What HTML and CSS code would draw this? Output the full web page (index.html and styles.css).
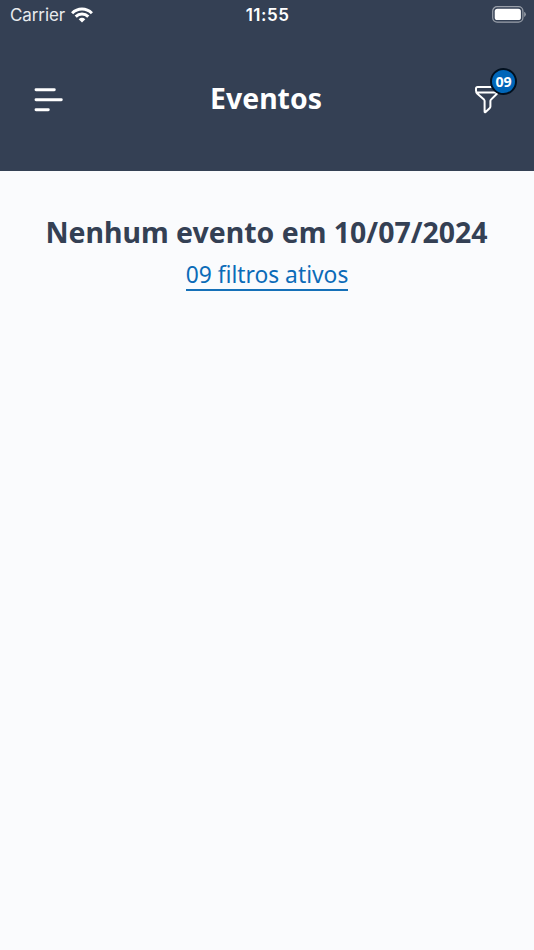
FILE: index.html
```html
<!DOCTYPE html>
<html lang="pt-BR">
<head>
<meta charset="utf-8">
<title>Eventos</title>
<link rel="stylesheet" href="styles.css">
</head>
<body>
<header class="header">
  <div class="status">
    <div class="carrier"><span>Carrier</span>
      <svg width="22" height="16" viewBox="0 0 22 16" fill="none" stroke="#fff" stroke-width="3"><path d="M1.1 6.2C6.8.6 15.2.6 20.9 6.2M4.7 9.7C8.3 6.2 13.7 6.2 17.3 9.7"/><path d="M11 15.6 7.7 12.2Q11 9.4 14.3 12.2Z" fill="#fff" stroke="none"/></svg>
    </div>
    <time class="time">11:55</time>
    <svg class="battery" width="34" height="17" viewBox="0 0 34 17"><rect x=".7" y=".7" width="30.2" height="15.4" rx="4.4" fill="none" stroke="#9aa0aa" stroke-width="1.2"/><rect x="2.7" y="2.8" width="26.2" height="11.2" rx="2.6" fill="#fff"/><path d="M32.2 5.7Q33.8 6.4 33.8 8.3T32.2 11Z" fill="#9aa0aa"/></svg>
  </div>
  <nav class="bar">
    <button class="icon-button menu" aria-label="Menu">
      <svg width="30" height="26" viewBox="0 0 30 26" fill="none" stroke="#fff" stroke-width="2.9" stroke-linecap="round"><path d="M2 2.8H20.3M2 12.8H27.3M2 22.7H14.3"/></svg>
    </button>
    <h1 class="title">Eventos</h1>
    <button class="icon-button filter" aria-label="Filtros">
      <svg width="26" height="30" viewBox="0 0 26 30" fill="none" stroke="#fff" stroke-width="2" stroke-linejoin="round"><path d="M3.6 2H22.6Q24.2 2 24.2 3.6V5.6Q24.2 7.4 22.9 8.7L17 14.6Q16.4 15.2 16.4 16V21.6Q16.4 22.6 15.6 23.3L11.6 27Q10.6 27.8 10.6 26.4V16Q10.6 15.2 10 14.6L3.4 8.7Q2 7.4 2 5.6V3.6Q2 2 3.6 2ZM2.8 7.4H23.5"/></svg>
      <span class="badge">09</span>
    </button>
  </nav>
</header>
<main class="content">
  <h2 class="message">Nenhum evento em 10/07/2024</h2>
  <a class="link" href="#">09 filtros ativos</a>
</main>
</body>
</html>
```
FILE: styles.css
```css
* { box-sizing: border-box; }
body {
  margin: 0;
  min-height: 950px;
  background: #fafbfd;
  color: #344054;
  font-family: "Noto Sans", sans-serif;
}
.header { height: 171px; background: #344054; color: #fff; }
.status {
  display: grid;
  grid-template-columns: 1fr auto 1fr;
  align-items: center;
  height: 28px;
  padding: 2px 8px 0 10px;
  font: 17px/26px Inter, sans-serif;
}
.carrier { display: flex; align-items: center; gap: 6px; color: #e8eaed; letter-spacing: -.1px; }
.time { font-weight: 600; font-size: 17px; letter-spacing: .5px; margin-right: 1px; }
.battery { justify-self: end; margin-bottom: 2px; }
.bar {
  display: grid;
  grid-template-columns: 1fr auto 1fr;
  align-items: center;
  height: 143px;
  padding: 0 34px 2px;
}
.icon-button { display: flex; position: relative; padding: 0; border: 0; background: none; }
.menu { justify-self: start; margin-top: 2px; }
.title { margin: 0 2px 2px 0; font-size: 28.4px; line-height: 40px; font-weight: 700; }
.filter { justify-self: end; margin-top: 3px; }
.badge {
  position: absolute;
  left: 16px;
  top: -17px;
  width: 27px;
  height: 27px;
  border: 2px solid #02101f;
  border-radius: 50%;
  background: #0066b8;
  color: #fff;
  font: 700 14.2px/23px "Noto Sans", sans-serif;
  text-align: center;
}
.content { display: flex; flex-direction: column; align-items: center; padding-top: 41px; }
.message { margin: 0 1px 0 0; font-size: 28.45px; line-height: 40px; font-weight: 700; white-space: nowrap; }
.link {
  margin-top: 8px;
  border-bottom: 2px solid #1570b8;
  color: #0b6bb8;
  font-size: 22.8px;
  line-height: 29px;
  text-decoration: none;
}
```
